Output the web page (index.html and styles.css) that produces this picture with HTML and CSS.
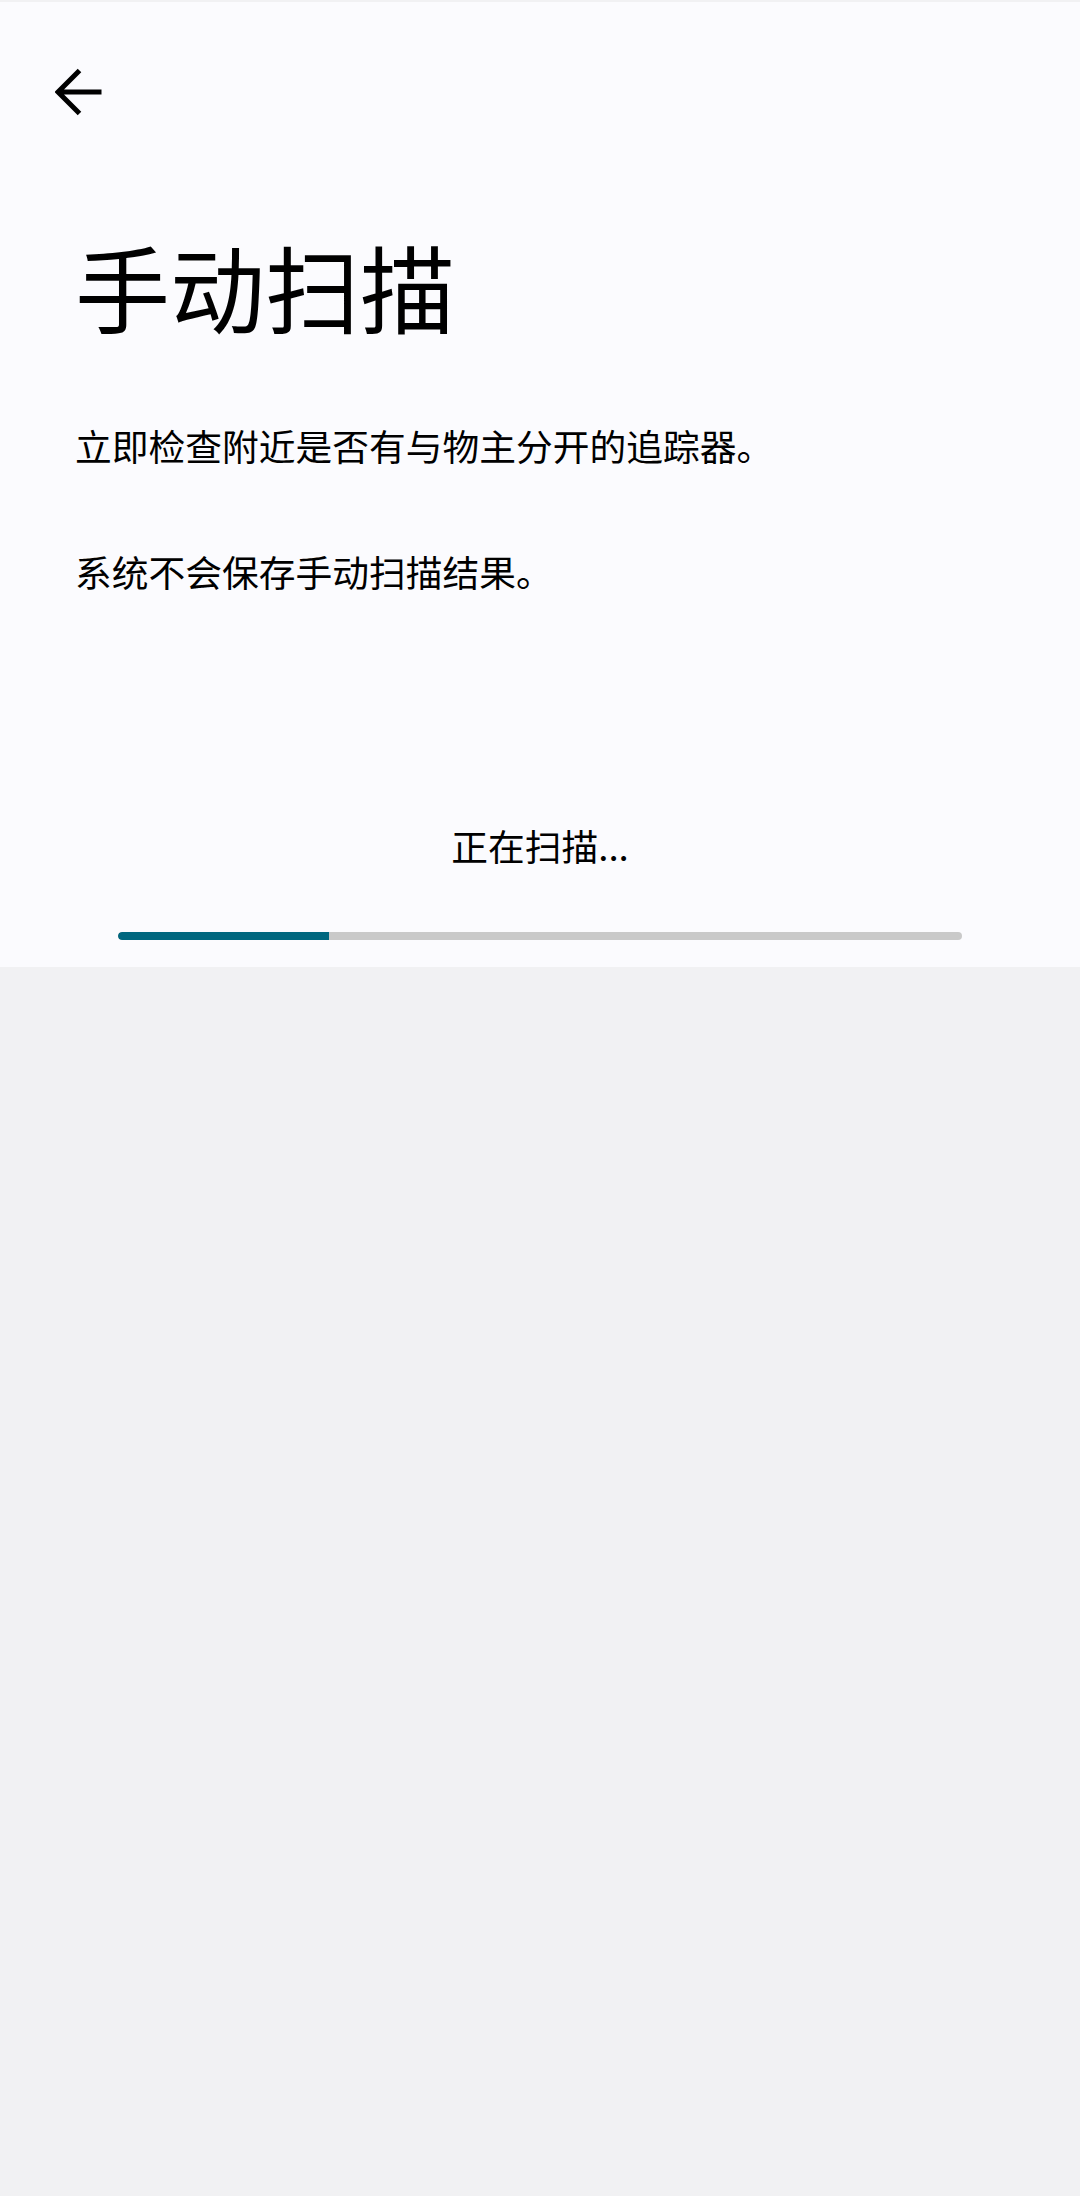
FILE: index.html
```html
<!DOCTYPE html>
<html lang="zh-CN">
<head>
<meta charset="utf-8">
<title>手动扫描</title>
<link rel="stylesheet" href="styles.css">
</head>
<body>
<div class="page">
  <div class="toolbar">
    <button class="back" aria-label="返回">
      <svg width="48" height="48" viewBox="0 0 48 48">
        <path d="M46.5 24H3M24.5 2.5L3 24l21.5 21.5" fill="none" stroke="#000" stroke-width="5" stroke-linecap="butt" stroke-linejoin="miter"/>
      </svg>
    </button>
  </div>
  <h1 class="title">手动扫描</h1>
  <p class="desc first">立即检查附近是否有与物主分开的追踪器。</p>
  <p class="desc second">系统不会保存手动扫描结果。</p>
  <div class="status">正在扫描...</div>
  <div class="progress"><div class="progress-fill" style="width:25%"></div></div>
</div>
</body>
</html>
```
FILE: styles.css
```css
html, body {
  margin: 0;
  padding: 0;
}
body {
  background: #f1f1f3;
  font-family: "Noto Sans CJK SC", "Noto Sans", Roboto, sans-serif;
  color: #000;
  width: 1080px;
  height: 2196px;
  padding-top: 2px;
  box-sizing: border-box;
}
.page {
  background: #fbfbfe;
  height: 965px;
  padding-top: 66px;
  box-sizing: border-box;
  display: flex;
  flex-direction: column;
}
.toolbar {
  display: flex;
  padding-left: 55px;
  height: 48px;
}
.back {
  width: 48px;
  height: 48px;
  padding: 0;
  border: 0;
  background: none;
  display: flex;
  align-items: center;
  justify-content: center;
}
.back svg {
  display: block;
}
.title {
  margin: 113px 0 0 0;
  padding-left: 75px;
  font-size: 95px;
  line-height: 113px;
  font-weight: 400;
}
.desc {
  margin: 0;
  padding-left: 75px;
  font-size: 36.75px;
  line-height: 50px;
}
.desc.first {
  margin-top: 78px;
}
.desc.second {
  margin-top: 76px;
}
.status {
  margin-top: 224px;
  text-align: center;
  font-size: 36.75px;
  line-height: 50px;
}
.progress {
  margin: 62px 118px 0;
  height: 8px;
  border-radius: 4px;
  background: #c9c9c9;
  overflow: hidden;
}
.progress-fill {
  height: 100%;
  background: #00677f;
  border-radius: 4px 0 0 4px;
}
```
